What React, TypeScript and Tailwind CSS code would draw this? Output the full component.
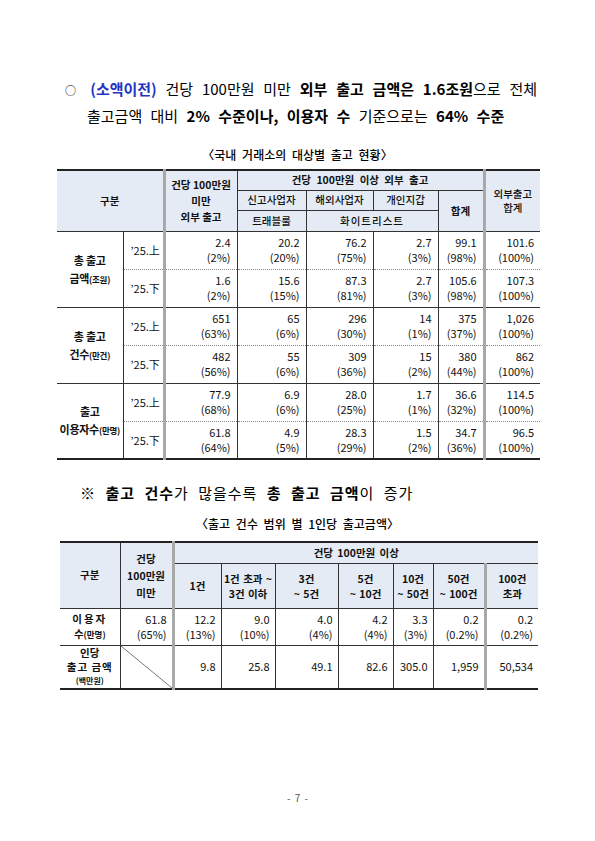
import React from "react";

type Pair = [string, string];

const KR = "font-['Noto_Sans_CJK_KR','Noto_Sans',sans-serif]";

const groups1: { l1: string; l2: string; unit: string; rows: { p: string; v: Pair[] }[] }[] = [
  {
    l1: "총 출고",
    l2: "금액",
    unit: "(조원)",
    rows: [
      { p: "’25.上", v: [["2.4", "(2%)"], ["20.2", "(20%)"], ["76.2", "(75%)"], ["2.7", "(3%)"], ["99.1", "(98%)"], ["101.6", "(100%)"]] },
      { p: "’25.下", v: [["1.6", "(2%)"], ["15.6", "(15%)"], ["87.3", "(81%)"], ["2.7", "(3%)"], ["105.6", "(98%)"], ["107.3", "(100%)"]] },
    ],
  },
  {
    l1: "총 출고",
    l2: "건수",
    unit: "(만건)",
    rows: [
      { p: "’25.上", v: [["651", "(63%)"], ["65", "(6%)"], ["296", "(30%)"], ["14", "(1%)"], ["375", "(37%)"], ["1,026", "(100%)"]] },
      { p: "’25.下", v: [["482", "(56%)"], ["55", "(6%)"], ["309", "(36%)"], ["15", "(2%)"], ["380", "(44%)"], ["862", "(100%)"]] },
    ],
  },
  {
    l1: "출고",
    l2: "이용자수",
    unit: "(만명)",
    rows: [
      { p: "’25.上", v: [["77.9", "(68%)"], ["6.9", "(6%)"], ["28.0", "(25%)"], ["1.7", "(1%)"], ["36.6", "(32%)"], ["114.5", "(100%)"]] },
      { p: "’25.下", v: [["61.8", "(64%)"], ["4.9", "(5%)"], ["28.3", "(29%)"], ["1.5", "(2%)"], ["34.7", "(36%)"], ["96.5", "(100%)"]] },
    ],
  },
];

const users2: Pair[] = [
  ["61.8", "(65%)"],
  ["12.2", "(13%)"],
  ["9.0", "(10%)"],
  ["4.0", "(4%)"],
  ["4.2", "(4%)"],
  ["3.3", "(3%)"],
  ["0.2", "(0.2%)"],
  ["0.2", "(0.2%)"],
];
const perUser2 = ["9.8", "25.8", "49.1", "82.6", "305.0", "1,959", "50,534"];

const hd = "bg-[#e4ebf5] text-center align-middle text-[10.5px] leading-[14px] text-[#111]";
const thin = "border-l border-l-[#333]";
const thick = "border-l-[3px] border-l-[#a8a8a8]";
const topDark = "border-t border-t-[#333]";
const topDot = "border-t border-t-[#888] [border-top-style:dotted]";
const topHeavy = "border-t-2 border-t-[#222]";
const botHeavy = "border-b-2 border-b-[#222]";

function Num({ v, p }: { v: string; p: string }) {
  return (
    <div className="flex flex-col items-end leading-[15px]">
      <span>{v}</span>
      <span>{p}</span>
    </div>
  );
}

function TradeTable() {
  return (
    <table className="ml-[57px] w-[483px] table-fixed border-collapse text-[11px] text-[#111]">
      <colgroup>
        <col className="w-[66px]" />
        <col className="w-[41px]" />
        <col className="w-[73px]" />
        <col className="w-[69px]" />
        <col className="w-[67px]" />
        <col className="w-[65px]" />
        <col className="w-[46px]" />
        <col className="w-[56px]" />
      </colgroup>
      <thead>
        <tr className="h-[20px]">
          <th colSpan={2} rowSpan={3} className={`${hd} ${topHeavy} font-bold`}>
            구분
          </th>
          <th rowSpan={3} className={`${hd} ${topHeavy} ${thick} font-bold leading-[16px]`}>
            건당 100만원
            <br />
            미만
            <br />
            외부 출고
          </th>
          <th colSpan={4} className={`${hd} ${topHeavy} ${thin} font-bold [word-spacing:3px]`}>
            건당 100만원 이상 외부 출고
          </th>
          <th rowSpan={3} className={`${hd} ${topHeavy} ${thick} font-medium`}>
            외부출고
            <br />
            합계
          </th>
        </tr>
        <tr className="h-[20px]">
          <th className={`${hd} ${topDark} ${thin} font-medium`}>신고사업자</th>
          <th className={`${hd} ${topDark} ${thin} font-medium`}>해외사업자</th>
          <th className={`${hd} ${topDark} ${thin} font-medium`}>개인지갑</th>
          <th rowSpan={2} className={`${hd} ${topDark} ${thin} font-bold`}>
            합계
          </th>
        </tr>
        <tr className="h-[21px]">
          <th className={`${hd} ${topDark} ${thin} font-medium`}>트래블룰</th>
          <th colSpan={2} className={`${hd} ${topDark} ${thin} font-medium tracking-[1px]`}>
            화이트리스트
          </th>
        </tr>
      </thead>
      <tbody>
        {groups1.map((g, gi) =>
          g.rows.map((r, ri) => {
            const last = gi === groups1.length - 1 && ri === 1;
            const top = ri === 0 ? topDark : topDot;
            return (
              <tr key={`${gi}-${ri}`} className="h-[38px]">
                {ri === 0 && (
                  <td
                    rowSpan={2}
                    className={`${topDark} ${gi === groups1.length - 1 ? botHeavy : ""} text-center align-middle font-bold leading-[18px] tracking-tight`}
                  >
                    <div>{g.l1}</div>
                    <div className="whitespace-nowrap">
                      {g.l2}
                      <span className="text-[8.5px]">{g.unit}</span>
                    </div>
                  </td>
                )}
                <td className={`${top} ${thin} ${last ? botHeavy : ""} pl-[7px] align-middle`}>{r.p}</td>
                {r.v.map(([v, p], i) => (
                  <td
                    key={i}
                    className={`${top} ${i === 0 || i === 5 ? thick : thin} ${last ? botHeavy : ""} pr-[6px] align-middle`}
                  >
                    <Num v={v} p={p} />
                  </td>
                ))}
              </tr>
            );
          })
        )}
      </tbody>
    </table>
  );
}

function RangeTable() {
  const heads: [string, string][] = [
    ["1건", ""],
    ["1건 초과 ~", "3건 이하"],
    ["3건", "~ 5건"],
    ["5건", "~ 10건"],
    ["10건", "~ 50건"],
    ["50건", "~ 100건"],
    ["100건", "초과"],
  ];
  return (
    <table className="ml-[60px] w-[478px] table-fixed border-collapse text-[11px] text-[#111]">
      <colgroup>
        <col className="w-[60px]" />
        <col className="w-[53px]" />
        <col className="w-[48px]" />
        <col className="w-[54px]" />
        <col className="w-[63px]" />
        <col className="w-[55px]" />
        <col className="w-[40px]" />
        <col className="w-[52px]" />
        <col className="w-[53px]" />
      </colgroup>
      <thead>
        <tr className="h-[21px]">
          <th rowSpan={2} className={`${hd} ${topHeavy} font-bold`}>
            구분
          </th>
          <th rowSpan={2} className={`${hd} ${topHeavy} ${thin} font-bold leading-[17px]`}>
            건당
            <br />
            100만원
            <br />
            미만
          </th>
          <th colSpan={7} className={`${hd} ${topHeavy} ${thick} font-bold [word-spacing:2px]`}>
            건당 100만원 이상
          </th>
        </tr>
        <tr className="h-[45px]">
          {heads.map(([a, b], i) => (
            <th
              key={i}
              className={`${hd} ${topDark} ${i === 0 || i === 6 ? thick : thin} font-bold leading-[15px] whitespace-nowrap [word-spacing:1px]`}
            >
              {a}
              {b && <br />}
              {b}
            </th>
          ))}
        </tr>
      </thead>
      <tbody>
        <tr className="h-[37px]">
          <td className={`${topDark} text-center align-middle font-bold leading-[15px] text-[10.5px]`}>
            <div className="tracking-[2px]">이용자</div>
            <div>
              수<span className="text-[8.5px]">(만명)</span>
            </div>
          </td>
          {users2.map(([v, p], i) => (
            <td key={i} className={`${topDark} ${i === 1 || i === 7 ? thick : thin} pr-[5px] align-middle`}>
              <Num v={v} p={p} />
            </td>
          ))}
        </tr>
        <tr className="h-[42px]">
          <td className={`${topDark} ${botHeavy} text-center align-middle font-bold text-[10.5px] leading-[14px]`}>
            <div>인당</div>
            <div className="tracking-[1px]">출고 금액</div>
            <div className="text-[8px]">(백만원)</div>
          </td>
          <td className={`${topDark} ${botHeavy} ${thin} relative p-0`}>
            <svg className="absolute inset-0 h-full w-full" viewBox="0 0 100 100" preserveAspectRatio="none">
              <line x1="0" y1="0" x2="100" y2="100" stroke="#777" strokeWidth="1" vectorEffect="non-scaling-stroke" />
            </svg>
          </td>
          {perUser2.map((v, i) => (
            <td
              key={i}
              className={`${topDark} ${botHeavy} ${i === 0 || i === 6 ? thick : thin} pr-[5px] text-right align-middle`}
            >
              {v}
            </td>
          ))}
        </tr>
      </tbody>
    </table>
  );
}

export default function App() {
  return (
    <div className={`${KR} h-[841px] w-[595px] overflow-hidden bg-white pt-[76px] text-black`}>
      <div className="ml-[65px] w-[472px] text-[15px] leading-[25px]">
        <div className="text-justify [text-align-last:justify]">
          <span className="text-[11px]">○</span>{" "}
          <span className="font-bold text-[#1f35c4]">(소액이전)</span> 건당 100만원 미만{" "}
          <b>외부 출고 금액은 1.6조원</b>으로 전체
        </div>
        <div className="pl-[22px] [word-spacing:5px]">
          출고금액 대비 <b>2% 수준이나, 이용자 수</b> 기준으로는 <b>64% 수준</b>
        </div>
      </div>

      <div className="mt-[19px] text-center text-[12px] font-medium leading-[16px] [word-spacing:3px]">
        〈국내 거래소의 대상별 출고 현황〉
      </div>
      <div className="mt-[6px]">
        <TradeTable />
      </div>

      <div className="ml-[80px] mt-[22px] text-[15px] leading-[22px] tracking-[1px] [word-spacing:5px]">
        ※ <b>출고 건수</b>가 많을수록 <b>총 출고 금액</b>이 증가
      </div>

      <div className="mt-[12px] text-center text-[12px] font-medium leading-[16px] [word-spacing:3px]">
        〈출고 건수 범위 별 1인당 출고금액〉
      </div>
      <div className="mt-[9px]">
        <RangeTable />
      </div>

      <div className="mt-[102px] text-center text-[10px] leading-[12px] text-[#555] [word-spacing:2px]">- 7 -</div>
    </div>
  );
}
